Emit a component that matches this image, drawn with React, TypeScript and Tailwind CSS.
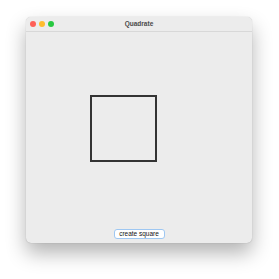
import React from 'react';

const TrafficLights: React.FC = () => (
  <div className="flex items-center gap-[3px]">
    <div className="w-[6px] h-[6px] rounded-full bg-[#fe5f57]" />
    <div className="w-[6px] h-[6px] rounded-full bg-[#febc2e]" />
    <div className="w-[6px] h-[6px] rounded-full bg-[#28c840]" />
  </div>
);

const App: React.FC = () => {
  return (
    <div
      className="w-[279px] h-[279px] bg-white pl-[26px] pt-[17px]"
      style={{ fontFamily: '"Liberation Sans", Arial, sans-serif' }}
    >
      {/* Window */}
      <div className="w-[226px] h-[226px] flex flex-col rounded-[5px] bg-[#ececec] shadow-[0_10px_20px_rgba(0,0,0,0.3),0_0_1px_rgba(0,0,0,0.3)] overflow-hidden">
        {/* Title bar */}
        <div className="relative h-[15px] flex items-center px-[4px] bg-[#ececec] border-b border-[#d8d8d8]">
          <TrafficLights />
          <span className="absolute left-0 right-0 text-center text-[6.5px] font-bold text-[#4a4a4a] leading-none">
            Quadrate
          </span>
        </div>

        {/* Content */}
        <div className="flex-1 flex flex-col">
          <div className="ml-[64px] mt-[63px] w-[67px] h-[67px] border-2 border-[#333333]" />
          <div className="flex-1" />
          <button className="self-center mb-[4px] w-[51px] h-[10px] flex items-center justify-center rounded-[3px] bg-white border border-[#9ec7f2] text-[6.5px] text-[#111] leading-none">
            create square
          </button>
        </div>
      </div>
    </div>
  );
};

export default App;
